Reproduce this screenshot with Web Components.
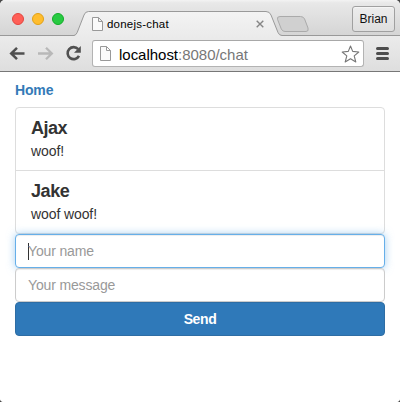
<!DOCTYPE html>
<html lang="en">
<head>
<meta charset="utf-8">
<title>donejs-chat</title>
<style>
html{background:#484848}
body{margin:0;font-family:"Liberation Sans",Arial,sans-serif}
</style>
</head>
<body>
<browser-window>
  <tab-strip slot="tabs"><browser-tab>donejs-chat</browser-tab><profile-button slot="profile">Brian</profile-button></tab-strip>
  <tool-bar slot="toolbar"><span slot="host">localhost</span><span slot="path">:8080/chat</span></tool-bar>
  <chat-page>
    <nav-link>Home</nav-link>
    <message-list>
      <chat-message><span slot="name" style="letter-spacing:-.5px">Ajax</span>woof!</chat-message>
      <chat-message><span slot="name" style="letter-spacing:-.4px">Jake</span>woof woof!</chat-message>
    </message-list>
    <text-field focused>Your name</text-field>
    <text-field>Your message</text-field>
    <send-button>Send</send-button>
  </chat-page>
</browser-window>
<script>
const element = (name, html) => customElements.define(name, class extends HTMLElement {
  constructor() {
    super();
    this.attachShadow({mode: 'open'}).innerHTML = html;
  }
});

element('browser-window', `<style>
:host{display:flex;flex-direction:column;box-sizing:border-box;width:400px;height:402px;background:#fff;border-radius:5px 5px 4px 4px;overflow:hidden}
</style><slot name="tabs"></slot><slot name="toolbar"></slot><slot></slot>`);

element('tab-strip', `<style>
:host{display:flex;box-sizing:border-box;height:36px;background:linear-gradient(#f3f3f3 0,#e8e8e8 3px,#d5d5d5 35px);box-shadow:inset 0 -1px #999;padding-left:12px}
.lights{display:flex;gap:8px;padding-top:13px;width:62px}
i{box-sizing:border-box;width:12px;height:12px;border-radius:50%;border:1px solid #e2463f;background:#ff5f57}
i:nth-child(2){background:#ffbd2e;border-color:#e1a116}
i:nth-child(3){background:#28ca42;border-color:#12ac28}
.new{margin:15px 0 0 -8px;width:34px;height:18px}
.end{margin:6px 5px 0 auto}
</style><div class="lights"><i></i><i></i><i></i></div><slot></slot>
<svg class="new" viewBox="0 0 34 18"><path d="M4 1.5H24.5Q27.5 1.5 28.6 4L32 13Q33 16.5 30 16.5H9Q6.5 16.5 5.3 14L1.5 4.3Q.8 1.5 4 1.5Z" fill="#d0d0d0" stroke="#aaa"/></svg>
<div class="end"><slot name="profile"></slot></div>`);

element('browser-tab', `<style>
:host{display:flex;position:relative;box-sizing:border-box;width:210px;height:36px;padding:17px 19px 0 18px;font-size:11.5px;line-height:14px;color:#000}
.shape{position:absolute;left:0;top:0}
.doc{position:relative;width:11px;height:14px;margin-right:4px}
.title{position:relative;letter-spacing:.22px}
.close{position:relative;margin:2px 0 0 auto;width:10px;height:10px}
</style><svg class="shape" width="210" height="36" viewBox="0 0 210 36"><defs><linearGradient id="g" x2="0" y2="1"><stop stop-color="#f3f3f3"/><stop offset="1" stop-color="#ebebeb"/></linearGradient></defs><path d="M0 36V35.5Q2.2 35 3.2 32.5L10 15Q11.2 11.5 14.5 11.5H192Q195.7 11.5 197 15L204 32.5Q205 35.3 208 35.5V36Z" fill="url(#g)"/><path d="M0 35.5Q2.2 35 3.2 32.5L10 15Q11.2 11.5 14.5 11.5H192Q195.7 11.5 197 15L204 32.5Q205 35.3 208 35.5H210" fill="none" stroke="#999"/></svg>
<svg class="doc" viewBox="0 0 11 14"><path d="M.5.5H6.5L10.5 4.5V13.5H.5ZM6.5.5V4.5H10.5" fill="#fafafa" stroke="#999"/></svg>
<span class="title"><slot></slot></span>
<svg class="close" viewBox="0 0 10 10"><path d="M1.7 1.7L8.3 8.3M8.3 1.7L1.7 8.3" stroke="#858585" stroke-width="1.4"/></svg>`);

element('profile-button', `<style>
:host{display:block;box-sizing:border-box;width:43px;height:26px;border:1px solid #a0a0a0;border-radius:3px;background:linear-gradient(#ededed,#dedede);box-shadow:inset 0 1px #f5f5f5;font-size:12px;line-height:25px;text-align:center;color:#111}
</style><slot></slot>`);

element('tool-bar', `<style>
:host{display:flex;box-sizing:border-box;height:36px;background:linear-gradient(#ebebeb,#dedede);border-bottom:1px solid #777;padding:4px 9px 0 9px}
.nav{display:flex;padding-top:5px;width:83px}
.address{display:flex;box-sizing:border-box;width:272px;height:27px;border:1px solid #b3b3b3;border-top-color:#a8a8a8;border-radius:3px;background:#fff;padding:5px 4px 0 7px;font-size:15px;line-height:17px;color:#000}
.doc{width:11px;height:15px;margin:0 8px 0 0}
.path{color:#777}
.url{white-space:nowrap;letter-spacing:-.02px}
.star{width:19px;height:18px;margin:-1px -1px 0 auto}
.menu{margin:7px 0 0 12px;width:13px;height:13px}
</style><div class="nav">
<svg width="17" height="17" viewBox="0 0 17 17"><path d="M15.5 8.5H3M8 2.8L2.2 8.5L8 14.2" fill="none" stroke="#505050" stroke-width="2.5"/></svg>
<svg width="17" height="17" viewBox="0 0 17 17" style="margin-left:11px"><path d="M1 8.5H14M9 2.8L14.8 8.5L9 14.2" fill="none" stroke="#b8b8b8" stroke-width="2.3"/></svg>
<svg width="17" height="17" viewBox="0 0 17 17" style="margin-left:11px"><path d="M13.2 4.2A6 6 0 1 0 14 10.8" fill="none" stroke="#505050" stroke-width="2.6"/><path d="M15.8 1V7.8H9Z" fill="#505050"/></svg>
</div><div class="address"><svg class="doc" viewBox="0 0 11 15"><path d="M.5.5H6.5L10.5 4.5V14.5H.5ZM6.5.5V4.5H10.5" fill="#fafafa" stroke="#999"/></svg><span class="url"><slot name="host"></slot><span class="path"><slot name="path"></slot></span></span>
<svg class="star" viewBox="0 0 19 18"><path d="M9.5 1L11.7 6.4L17.8 7L13.2 10.8L14.8 17L9.5 13.7L4.2 17L5.8 10.8L1.2 7L7.3 6.4Z" fill="#fff" stroke="#777" stroke-width="1.1" stroke-linejoin="round"/></svg></div>
<svg class="menu" viewBox="0 0 13 13"><path d="M1.5 1.5H11.5M1.5 6.5H11.5M1.5 11.5H11.5" stroke="#4d4d4d" stroke-width="3" stroke-linecap="round"/></svg>`);

element('chat-page', `<style>
:host{display:flex;flex-direction:column;flex:1;background:#fff;padding:8px 15px 0;font-size:14px;line-height:20px;color:#333}
</style><slot></slot>`);

element('nav-link', `<style>
:host{display:block;height:27px;font-weight:bold;letter-spacing:-.15px;color:#337ab7}
</style><slot></slot>`);

element('message-list', `<style>
:host{display:block;box-sizing:border-box;height:127px;border:1px solid #ddd;border-radius:4px}
</style><slot></slot>`);

element('chat-message', `<style>
:host{display:block;box-sizing:border-box;height:63px;padding:10px 15px;letter-spacing:-.1px}
:host(:first-child){border-bottom:1px solid #ddd}
h4{margin:0 0 5px;font-size:18px;line-height:20px;font-weight:bold}
p{margin:0;line-height:17px}
</style><h4><slot name="name"></slot></h4><p><slot></slot></p>`);

element('text-field', `<style>
:host{display:flex;align-items:center;box-sizing:border-box;height:34px;border:1px solid #ccc;border-radius:4px;background:#fff;box-shadow:inset 0 1px 1px rgba(0,0,0,.075);padding:0 12px;color:#999;letter-spacing:-.15px}
:host([focused]){border-color:#66afe9;box-shadow:inset 0 1px 1px rgba(0,0,0,.075),0 0 8px rgba(102,175,233,.6)}
i{display:none;width:1px;height:17px;margin-right:-1px;background:#333}
:host([focused]) i{display:block}
</style><i></i><span><slot></slot></span>`);

element('send-button', `<style>
:host{display:block;box-sizing:border-box;height:34px;border:1px solid #2e6da4;border-radius:4px;background:#2f79b9;color:#fff;font-weight:bold;line-height:32px;text-align:center;letter-spacing:-.4px;position:relative}
</style><slot></slot>`);
</script>
</body>
</html>
